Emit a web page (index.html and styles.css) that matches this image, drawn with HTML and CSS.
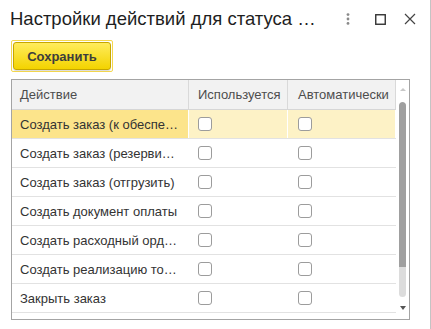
FILE: index.html
```html
<!DOCTYPE html>
<html lang="ru">
<head>
<meta charset="UTF-8">
<title>Настройки действий для статуса</title>
<link rel="stylesheet" href="styles.css">
</head>
<body>
<div class="window">
  <div class="titlebar">
    <div class="title">Настройки действий для статуса …</div>
    <div class="controls">
      <span class="ctl kebab">
        <svg width="4" height="12" viewBox="0 0 4 12"><circle cx="2" cy="1.6" r="1.4"/><circle cx="2" cy="6" r="1.4"/><circle cx="2" cy="10.4" r="1.4"/></svg>
      </span>
      <span class="ctl">
        <svg width="11" height="11" viewBox="0 0 11 11"><rect x="0.75" y="0.75" width="9.5" height="9.5" fill="none" stroke="#333" stroke-width="1.4"/></svg>
      </span>
      <span class="ctl">
        <svg width="12" height="12" viewBox="0 0 12 12"><path d="M1 1L11 11M11 1L1 11" stroke="#444" stroke-width="1.2"/></svg>
      </span>
    </div>
  </div>

  <div class="toolbar">
    <span class="focus-ring"><button class="btn-save">Сохранить</button></span>
  </div>

  <div class="grid">
    <div class="grid-main">
      <div class="row head">
        <div class="cell c1">Действие</div>
        <div class="cell c2">Используется</div>
        <div class="cell c3">Автоматически</div>
      </div>
      <div class="row selected">
        <div class="cell c1">Создать заказ (к обеспе…</div>
        <div class="cell c2"><span class="check"></span></div>
        <div class="cell c3"><span class="check"></span></div>
      </div>
      <div class="row">
        <div class="cell c1">Создать заказ (резерви…</div>
        <div class="cell c2"><span class="check"></span></div>
        <div class="cell c3"><span class="check"></span></div>
      </div>
      <div class="row">
        <div class="cell c1">Создать заказ (отгрузить)</div>
        <div class="cell c2"><span class="check"></span></div>
        <div class="cell c3"><span class="check"></span></div>
      </div>
      <div class="row">
        <div class="cell c1">Создать документ оплаты</div>
        <div class="cell c2"><span class="check"></span></div>
        <div class="cell c3"><span class="check"></span></div>
      </div>
      <div class="row">
        <div class="cell c1">Создать расходный орд…</div>
        <div class="cell c2"><span class="check"></span></div>
        <div class="cell c3"><span class="check"></span></div>
      </div>
      <div class="row">
        <div class="cell c1">Создать реализацию то…</div>
        <div class="cell c2"><span class="check"></span></div>
        <div class="cell c3"><span class="check"></span></div>
      </div>
      <div class="row">
        <div class="cell c1">Закрыть заказ</div>
        <div class="cell c2"><span class="check"></span></div>
        <div class="cell c3"><span class="check"></span></div>
      </div>
      <div class="row">
        <div class="cell c1"></div>
        <div class="cell c2"><span class="check"></span></div>
        <div class="cell c3"><span class="check"></span></div>
      </div>
    </div>

    <!-- scrollbar -->
    <div class="scrollbar">
      <span class="arrow-up"></span>
      <div class="track"><div class="thumb"></div></div>
      <span class="arrow-down"></span>
    </div>
  </div>
</div>
</body>
</html>
```

FILE: styles.css
```css
* {
  box-sizing: border-box;
}
body {
  margin: 0;
  font-family: "Liberation Sans", Arial, sans-serif;
  background: #fff;
  color: #333;
}
.window {
  width: 431px;
  height: 329px;
  border-right: 1px solid #c4c4c4;
  overflow: hidden;
}
.titlebar {
  display: flex;
  align-items: center;
  height: 38px;
  padding-left: 10px;
}
.title {
  flex: 1;
  min-width: 0;
  font-size: 18.5px;
  line-height: 38px;
  color: #1e1e1e;
  white-space: nowrap;
  overflow: hidden;
}
.controls {
  display: flex;
  align-items: center;
  padding-right: 5px;
}
.ctl {
  width: 30px;
  height: 38px;
  display: flex;
  align-items: center;
  justify-content: center;
}
.kebab {
  margin-right: 2px;
}
.kebab svg {
  fill: #8a8a8a;
}
.toolbar {
  padding: 2px 0 0 11px;
  height: 41px;
}
.focus-ring {
  display: inline-block;
  padding: 1px;
  border: 1px solid #f5d84e;
  border-radius: 2px;
}
.btn-save {
  display: block;
  width: 98px;
  height: 28px;
  padding: 0;
  font-family: "Liberation Sans", Arial, sans-serif;
  font-size: 13px;
  font-weight: bold;
  color: #3d3d3d;
  background: linear-gradient(#ffec5c, #f3d300);
  border: 1px solid #c6a600;
  border-radius: 3px;
  box-shadow: 0 1px 1px rgba(0, 0, 0, 0.15);
}
.grid {
  display: flex;
  width: 399px;
  height: 241px;
  margin: 0 0 0 11px;
  border: 1px solid #a4a4a4;
  overflow: hidden;
}
.grid-main {
  width: 384px;
  overflow: hidden;
}
.row {
  display: flex;
  height: 29px;
  border-bottom: 1px solid #e2e2e2;
  font-size: 13px;
}
.row.head {
  height: 30px;
  background: #f2f2f2;
  border-bottom: 1px solid #d6d6d6;
  color: #4d4d4d;
}
.cell {
  display: flex;
  align-items: center;
  white-space: nowrap;
  overflow: hidden;
  border-right: 1px solid #fff;
}
.head .cell {
  border-right: 1px solid #d9d9d9;
}
.c1 {
  width: 177px;
  padding-left: 8px;
}
.c2 {
  width: 99px;
  padding-left: 9px;
}
.c3 {
  width: 108px;
  padding-left: 10px;
}
.selected .cell {
  background: #fdf2c6;
}
.selected .c1 {
  background: #fce48b;
}
.check {
  display: block;
  width: 14px;
  height: 14px;
  border: 1px solid #9c9c9c;
  border-radius: 3px;
  background: #fff;
}
/* scrollbar */
.scrollbar {
  width: 13px;
  display: flex;
  flex-direction: column;
  align-items: center;
  padding-top: 8px;
}
.arrow-up {
  width: 0;
  height: 0;
  border-left: 3px solid transparent;
  border-right: 3px solid transparent;
  border-bottom: 3px solid #c8c8c8;
  margin-bottom: 11px;
}
.track {
  width: 7px;
  height: 195px;
  background: #dcdcdc;
  border-radius: 4px;
  overflow: hidden;
}
.thumb {
  height: 165px;
  background: #9f9f9f;
  border-radius: 4px 4px 0 0;
}
.arrow-down {
  width: 0;
  height: 0;
  margin-top: 9px;
  border-left: 3px solid transparent;
  border-right: 3px solid transparent;
  border-top: 4px solid #555;
}
```
